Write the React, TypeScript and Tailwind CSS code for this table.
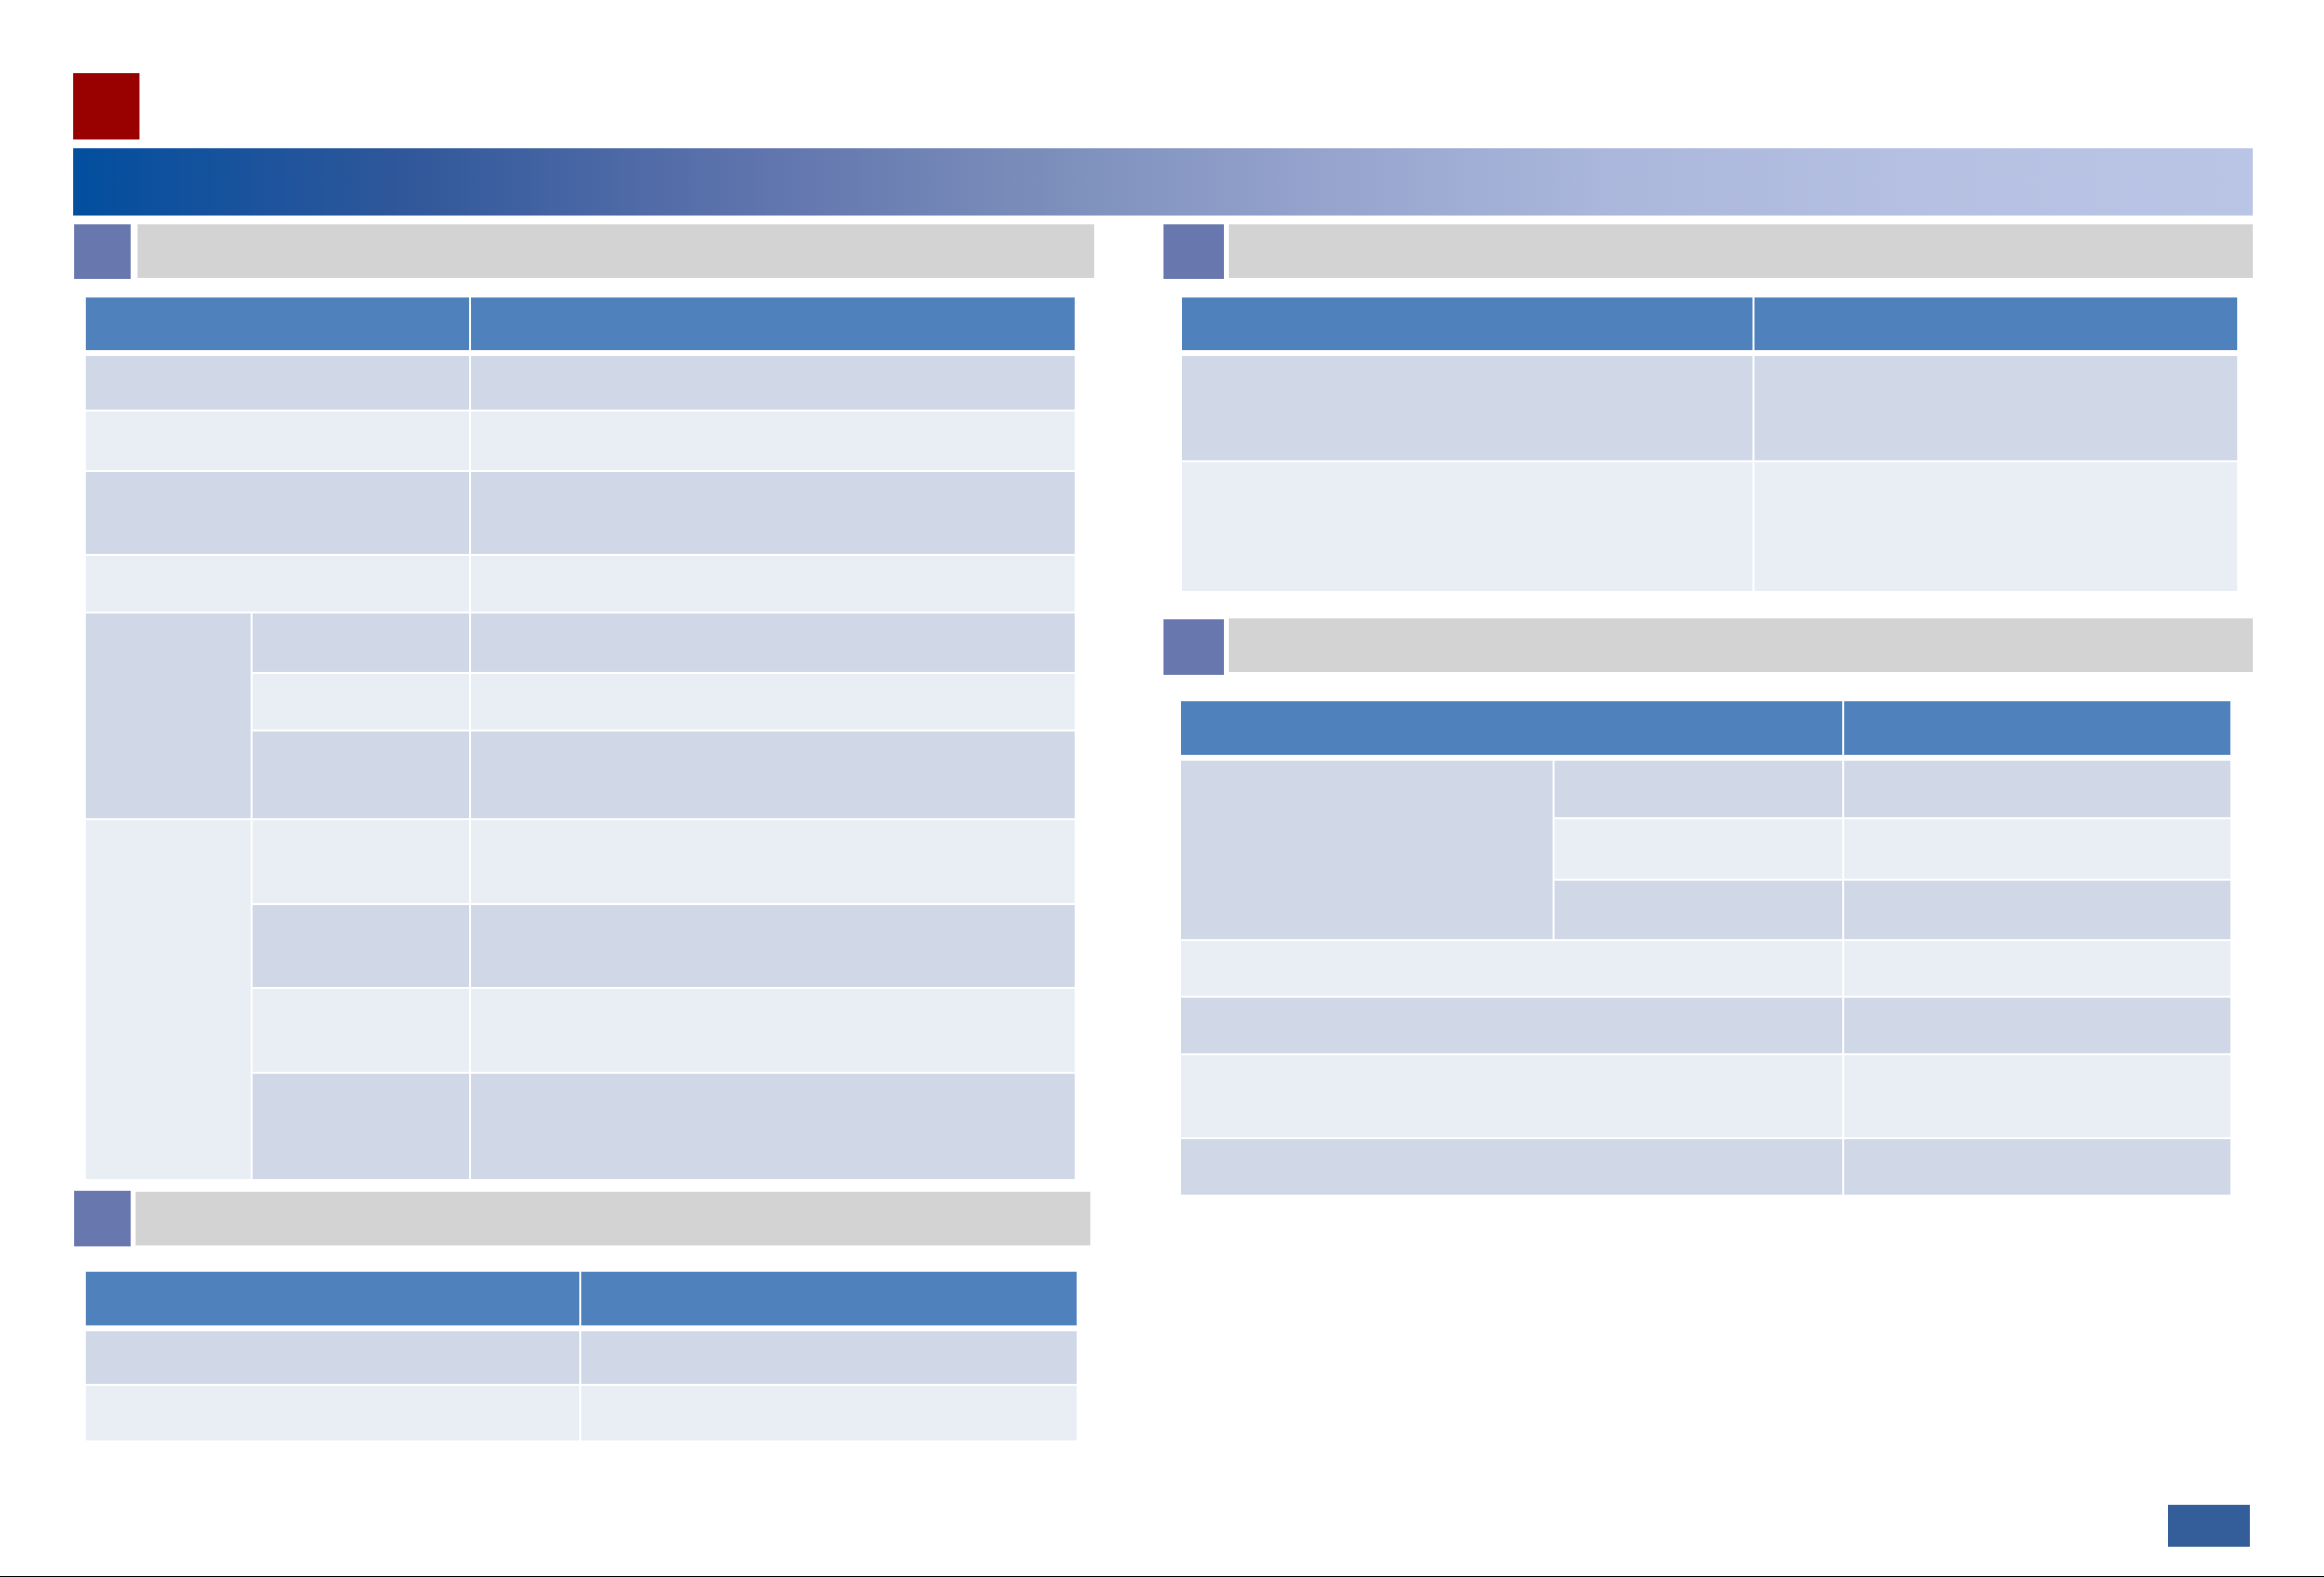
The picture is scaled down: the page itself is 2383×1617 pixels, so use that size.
import React from 'react'

const HEAD = 'bg-[#4f81bd]'
const DARK = 'bg-[#d0d8e8]'
const LIGHT = 'bg-[#e9edf4]'

function Cell({ tone, className = '' }: { tone: string; className?: string }) {
  return <div className={`${tone} ${className}`} />
}

export default function App() {
  return (
    <div className="w-[2383px] h-[1617px] flex flex-col bg-white px-[75px] pt-[75px] border-b border-black font-['Liberation_Sans',sans-serif]">
      {/* Title marker + banner */}
      <div className="w-[68px] h-[68px] bg-[#990000]" />
      <div className="mt-[9px] w-[2235px] h-[69px] bg-[linear-gradient(90deg,#024e9f_0%,#2f579a_15%,#6175ae_32%,#7a8dba_44%,#95a3cd_57%,#aab6db_70%,#b5c0e2_85%,#bac5e6_100%)]" />

      <div className="mt-[9px] flex items-start gap-[71px]">
        {/* Left column */}
        <div className="w-[1047px] flex flex-col">
          {/* Section 1 */}
          <div className="flex items-start">
            <div className="ml-[1px] w-[58px] h-[56px] bg-[#6977af]" />
            <div className="ml-[7px] w-[981px] h-[55px] bg-[#d3d3d3]" />
          </div>

          <div className="ml-[13px] mt-[19px] w-[1014px]">
            <div className="grid grid-cols-[393px_619px] gap-[2px] h-[54px] mb-[6px]">
              <Cell tone={HEAD} />
              <Cell tone={HEAD} />
            </div>
            <div className="grid grid-cols-[169px_222px_619px] grid-rows-[55px_60px_84px_57px_60px_57px_89px_85px_84px_85px_108px] gap-[2px]">
              <Cell tone={DARK} className="col-span-2" />
              <Cell tone={DARK} />
              <Cell tone={LIGHT} className="col-span-2" />
              <Cell tone={LIGHT} />
              <Cell tone={DARK} className="col-span-2" />
              <Cell tone={DARK} />
              <Cell tone={LIGHT} className="col-span-2" />
              <Cell tone={LIGHT} />

              <Cell tone={DARK} className="row-span-3" />
              <Cell tone={DARK} />
              <Cell tone={DARK} />
              <Cell tone={LIGHT} />
              <Cell tone={LIGHT} />
              <Cell tone={DARK} />
              <Cell tone={DARK} />

              <Cell tone={LIGHT} className="row-span-4" />
              <Cell tone={LIGHT} />
              <Cell tone={LIGHT} />
              <Cell tone={DARK} />
              <Cell tone={DARK} />
              <Cell tone={LIGHT} />
              <Cell tone={LIGHT} />
              <Cell tone={DARK} />
              <Cell tone={DARK} />
            </div>
          </div>

          {/* Section 3 */}
          <div className="mt-[12px] flex items-start">
            <div className="ml-[1px] w-[58px] h-[57px] bg-[#6977af]" />
            <div className="ml-[5px] mt-[1px] w-[979px] h-[55px] bg-[#d3d3d3]" />
          </div>

          <div className="ml-[13px] mt-[26px] w-[1016px]">
            <div className="grid grid-cols-[506px_508px] gap-[2px] h-[55px] mb-[6px]">
              <Cell tone={HEAD} />
              <Cell tone={HEAD} />
            </div>
            <div className="grid grid-cols-[506px_508px] grid-rows-[54px_56px] gap-[2px]">
              <Cell tone={DARK} />
              <Cell tone={DARK} />
              <Cell tone={LIGHT} />
              <Cell tone={LIGHT} />
            </div>
          </div>
        </div>

        {/* Right column */}
        <div className="w-[1117px] flex flex-col">
          {/* Section 2 */}
          <div className="flex items-start">
            <div className="w-[62px] h-[56px] bg-[#6977af]" />
            <div className="ml-[5px] w-[1050px] h-[55px] bg-[#d3d3d3]" />
          </div>

          <div className="ml-[19px] mt-[19px] w-[1082px]">
            <div className="grid grid-cols-[585px_495px] gap-[2px] h-[54px] mb-[6px]">
              <Cell tone={HEAD} />
              <Cell tone={HEAD} />
            </div>
            <div className="grid grid-cols-[585px_495px] grid-rows-[107px_132px] gap-[2px]">
              <Cell tone={DARK} />
              <Cell tone={DARK} />
              <Cell tone={LIGHT} />
              <Cell tone={LIGHT} />
            </div>
          </div>

          {/* Section 4 */}
          <div className="mt-[28px] flex items-start">
            <div className="mt-[1px] w-[62px] h-[57px] bg-[#6977af]" />
            <div className="ml-[5px] w-[1050px] h-[55px] bg-[#d3d3d3]" />
          </div>

          <div className="ml-[18px] mt-[27px] w-[1076px]">
            <div className="grid grid-cols-[678px_396px] gap-[2px] h-[55px] mb-[6px]">
              <Cell tone={HEAD} />
              <Cell tone={HEAD} />
            </div>
            <div className="grid grid-cols-[381px_295px_396px] grid-rows-[58px_61px_60px_56px_57px_84px_57px] gap-[2px]">
              <Cell tone={DARK} className="row-span-3" />
              <Cell tone={DARK} />
              <Cell tone={DARK} />
              <Cell tone={LIGHT} />
              <Cell tone={LIGHT} />
              <Cell tone={DARK} />
              <Cell tone={DARK} />

              <Cell tone={LIGHT} className="col-span-2" />
              <Cell tone={LIGHT} />
              <Cell tone={DARK} className="col-span-2" />
              <Cell tone={DARK} />
              <Cell tone={LIGHT} className="col-span-2" />
              <Cell tone={LIGHT} />
              <Cell tone={DARK} className="col-span-2" />
              <Cell tone={DARK} />
            </div>
          </div>
        </div>
      </div>

      {/* Page number tab */}
      <div className="mt-auto mb-[30px] flex justify-end">
        <div className="mr-[1px] w-[84px] h-[43px] bg-[#345e99]" />
      </div>
    </div>
  )
}
